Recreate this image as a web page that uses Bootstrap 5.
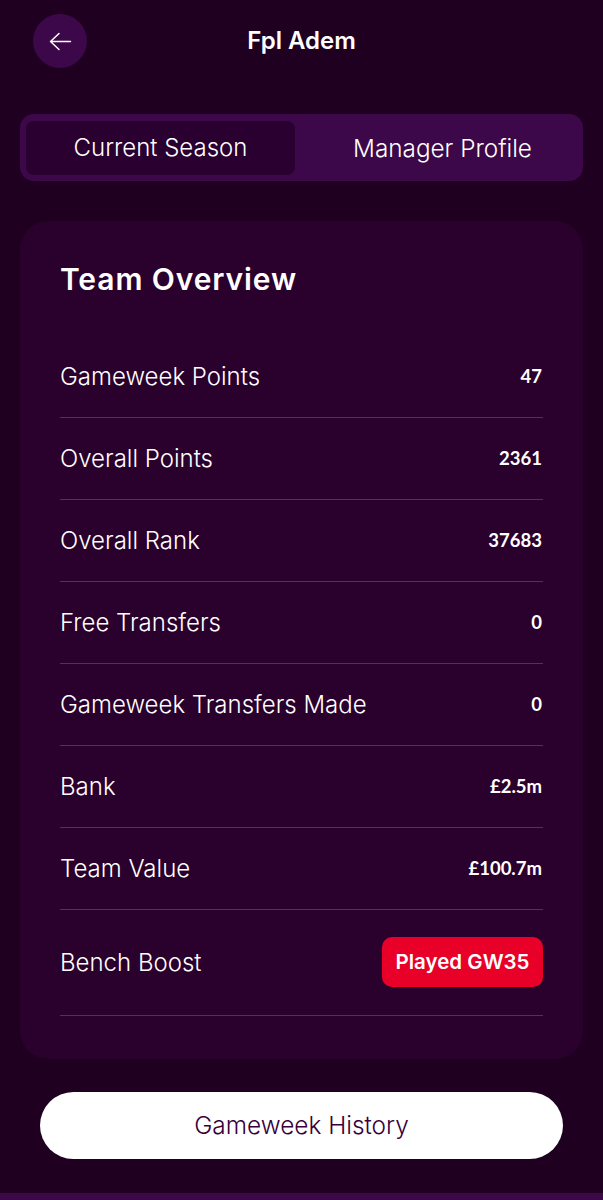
<!DOCTYPE html>
<html lang="en">
<head>
<meta charset="utf-8">
<title>Fpl Adem</title>
<link rel="stylesheet" href="https://cdn.jsdelivr.net/npm/bootstrap@5.3.0/dist/css/bootstrap.min.css">
<style>
html,body{height:1200px;overflow:hidden}
body{background:#1f0021;color:#fff;font-family:"Inter","Liberation Sans",sans-serif}
.screen{height:1200px;padding:14px 20px 0}
.top-bar{height:54px;padding-left:13px}
.back-btn{width:54px;height:54px;background:#3d0849;border:0;border-radius:50%;flex:none;padding:0}
.screen-title{font-size:24px;font-weight:600;left:0;right:0;top:0;bottom:0;line-height:54px;pointer-events:none}
.seg{margin-top:46px;height:67px;background:#3d0849;border-radius:14px;padding:7px 6px 6px}
.seg-item{flex:1 1 0;font-size:24.3px;font-weight:300;line-height:54px;border-radius:8px;color:#fff;padding-left:13px}
.seg-item.on{background:#290030;flex:0 0 269px;font-size:24px;padding-left:0}
.panel{margin-top:40px;height:838px;background:#2a002d;border-radius:28px;padding:0 40px}
.panel-title{font-size:30px;font-weight:600;letter-spacing:.9px;line-height:36px;margin:0;padding-top:40px;height:115px}
.stat{height:82px;border-bottom:1px solid #5a2a66;font-size:24px;font-weight:300}
.stat.tall{height:106px}
.stat b{font-family:"Lato","Liberation Sans",sans-serif;font-size:18.5px;font-weight:700;padding-right:1px}
.played{background:#e90029;border-radius:10px;font-size:20.5px;font-weight:600;width:161px;height:50px;line-height:50px;text-align:center;margin-bottom:2px}
.history{margin:33px 20px 0;width:523px;height:67px;background:#fff;color:#37003c;border:0;border-radius:34px;font-size:24.4px;font-weight:300;display:block}
.foot-bar{left:0;right:0;bottom:0;height:7px;background:#3d0849}
</style>
</head>
<body>
<div class="screen position-relative">
  <div class="top-bar position-relative d-flex align-items-center">
    <button class="back-btn d-flex align-items-center justify-content-center" aria-label="Back">
      <svg width="23" height="19" viewBox="0 0 23 19" fill="none" stroke="#fff" stroke-width="1.5" stroke-linecap="round" stroke-linejoin="round"><path d="M21.5 9.5H1.5M10 1.5l-8.5 8 8.5 8"/></svg>
    </button>
    <div class="screen-title position-absolute text-center">Fpl Adem</div>
  </div>
  <div class="seg d-flex">
    <div class="seg-item on text-center">Current Season</div>
    <div class="seg-item text-center">Manager Profile</div>
  </div>
  <div class="panel">
    <h2 class="panel-title">Team Overview</h2>
    <div class="stat d-flex justify-content-between align-items-center"><span>Gameweek Points</span><b>47</b></div>
    <div class="stat d-flex justify-content-between align-items-center"><span>Overall Points</span><b>2361</b></div>
    <div class="stat d-flex justify-content-between align-items-center"><span>Overall Rank</span><b>37683</b></div>
    <div class="stat d-flex justify-content-between align-items-center"><span>Free Transfers</span><b>0</b></div>
    <div class="stat d-flex justify-content-between align-items-center"><span>Gameweek Transfers Made</span><b>0</b></div>
    <div class="stat d-flex justify-content-between align-items-center"><span>Bank</span><b>£2.5m</b></div>
    <div class="stat d-flex justify-content-between align-items-center"><span>Team Value</span><b>£100.7m</b></div>
    <div class="stat tall d-flex justify-content-between align-items-center"><span>Bench Boost</span><div class="played">Played GW35</div></div>
  </div>
  <button class="history">Gameweek History</button>
  <div class="foot-bar position-absolute"></div>
</div>
<script src="https://cdn.jsdelivr.net/npm/bootstrap@5.3.0/dist/js/bootstrap.bundle.min.js"></script>
</body>
</html>
